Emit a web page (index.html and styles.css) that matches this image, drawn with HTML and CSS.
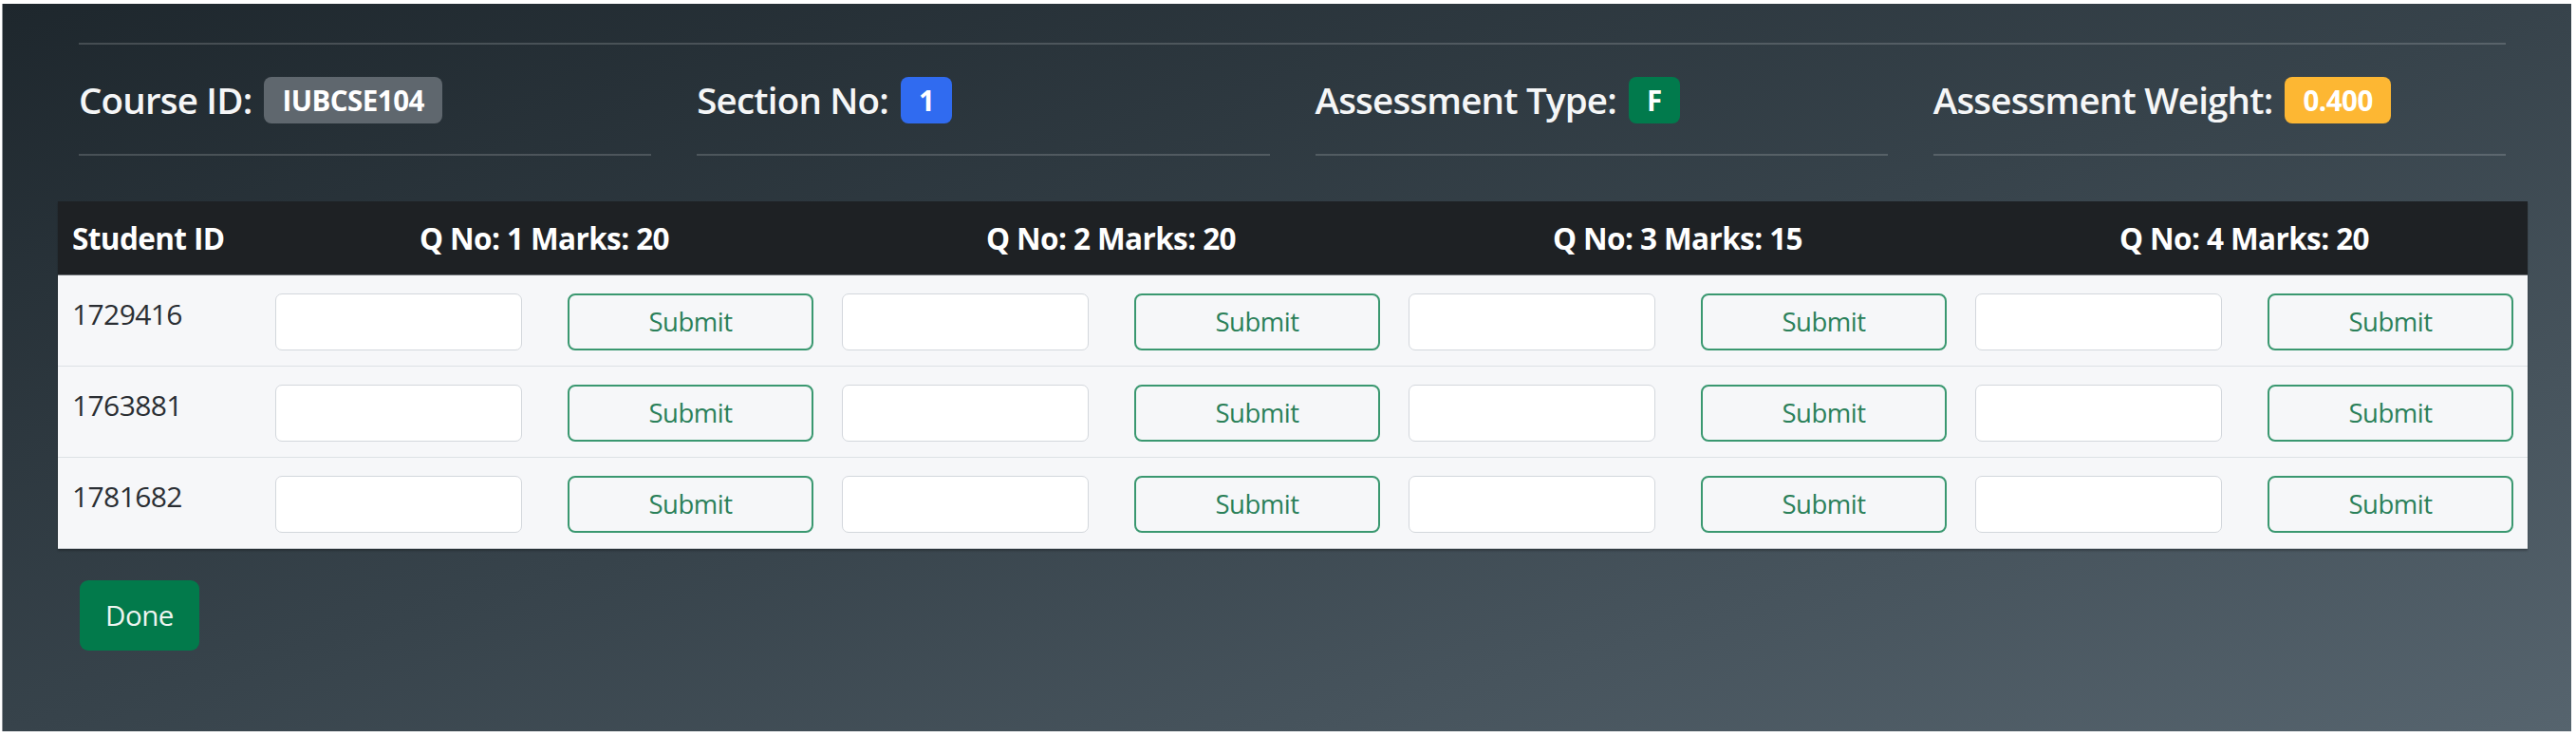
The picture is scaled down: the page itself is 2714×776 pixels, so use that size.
FILE: index.html
```html
<!DOCTYPE html>
<html lang="en">
<head>
<meta charset="utf-8">
<title>Marks Entry</title>
<link rel="stylesheet" href="styles.css">
</head>
<body>
<div class="page">
  <div class="top-rule"></div>
  <div class="info">
    <div class="info-item">
      <div class="info-line"><span class="label">Course ID:</span><span class="badge badge-secondary">IUBCSE104</span></div>
      <div class="rule"></div>
    </div>
    <div class="info-item">
      <div class="info-line"><span class="label">Section No:</span><span class="badge badge-primary">1</span></div>
      <div class="rule"></div>
    </div>
    <div class="info-item">
      <div class="info-line"><span class="label">Assessment Type:</span><span class="badge badge-success">F</span></div>
      <div class="rule"></div>
    </div>
    <div class="info-item">
      <div class="info-line"><span class="label">Assessment Weight:</span><span class="badge badge-warning">0.400</span></div>
      <div class="rule"></div>
    </div>
  </div>

  <table class="marks">
    <colgroup>
      <col class="c-id">
      <col class="c-in"><col class="c-btn">
      <col class="c-in"><col class="c-btn">
      <col class="c-in"><col class="c-btn">
      <col class="c-in"><col class="c-btn">
    </colgroup>
    <thead>
      <tr>
        <th class="th-id">Student ID</th>
        <th colspan="2">Q No: 1 Marks: 20</th>
        <th colspan="2">Q No: 2 Marks: 20</th>
        <th colspan="2">Q No: 3 Marks: 15</th>
        <th colspan="2">Q No: 4 Marks: 20</th>
      </tr>
    </thead>
    <tbody>
      <tr>
        <td class="sid">1729416</td>
        <td><input class="field" type="text"></td><td><button class="submit" type="button">Submit</button></td>
        <td><input class="field" type="text"></td><td><button class="submit" type="button">Submit</button></td>
        <td><input class="field" type="text"></td><td><button class="submit" type="button">Submit</button></td>
        <td><input class="field" type="text"></td><td><button class="submit" type="button">Submit</button></td>
      </tr>
      <tr>
        <td class="sid">1763881</td>
        <td><input class="field" type="text"></td><td><button class="submit" type="button">Submit</button></td>
        <td><input class="field" type="text"></td><td><button class="submit" type="button">Submit</button></td>
        <td><input class="field" type="text"></td><td><button class="submit" type="button">Submit</button></td>
        <td><input class="field" type="text"></td><td><button class="submit" type="button">Submit</button></td>
      </tr>
      <tr>
        <td class="sid">1781682</td>
        <td><input class="field" type="text"></td><td><button class="submit" type="button">Submit</button></td>
        <td><input class="field" type="text"></td><td><button class="submit" type="button">Submit</button></td>
        <td><input class="field" type="text"></td><td><button class="submit" type="button">Submit</button></td>
        <td><input class="field" type="text"></td><td><button class="submit" type="button">Submit</button></td>
      </tr>
    </tbody>
  </table>

  <button class="done" type="button">Done</button>
</div>
</body>
</html>
```

FILE: styles.css
```css
* { box-sizing: border-box; }

html, body {
  margin: 0;
  padding: 0;
  background: #ffffff;
}

body {
  font-family: "Open Sans", "Noto Sans", "Liberation Sans", sans-serif;
  color: #212529;
}

.page {
  margin: 4px 5px 0 2px;
  height: 766px;
  border-left: 1px solid #8d9296;
  background: linear-gradient(to bottom right, #1e272d 0%, #37434b 50%, #56646e 100%);
  padding: 41px 47px 0 58px;
}

.top-rule {
  margin: 0 22px;
  height: 2px;
  background: rgba(255, 255, 255, 0.17);
}

.info {
  margin: 0 22px;
  display: grid;
  grid-template-columns: repeat(4, 1fr);
  column-gap: 48px;
}

.info-item {
  display: flex;
  flex-direction: column;
}

.info-line {
  margin-top: 34px;
  height: 49px;
  display: flex;
  align-items: center;
  gap: 13px;
}

.label {
  color: #f5f6f7;
  font-size: 38.5px;
  font-weight: 600;
  line-height: 1;
  letter-spacing: -0.8px;
}

.badge {
  height: 49px;
  padding: 0 19px;
  border-radius: 8px;
  color: #ffffff;
  font-size: 29.5px;
  font-weight: 700;
  line-height: 49px;
  letter-spacing: -0.5px;
}

.badge-secondary { background: #5f676e; }
.badge-primary { background: #306bf0; }
.badge-success { background: #017a4c; }
.badge-warning { background: #fdb733; }

.rule {
  margin-top: 32px;
  height: 2px;
  background: rgba(255, 255, 255, 0.17);
}

.marks {
  margin-top: 48px;
  width: 2602px;
  table-layout: fixed;
  border-collapse: collapse;
  background: #f6f7f9;
  box-shadow: 0 2px 2px rgba(0, 0, 0, 0.25);
}

.c-id { width: 214px; }
.c-in { width: 308px; }
.c-btn { width: 289px; }

.marks th {
  height: 77px;
  background: #1e2124;
  color: #ffffff;
  font-size: 31.5px;
  font-weight: 700;
  text-align: center;
  padding: 0 15px;
  border-bottom: 1px solid #6e7377;
  letter-spacing: -0.6px;
}

.marks th.th-id {
  text-align: left;
}

.marks td {
  height: 95px;
  padding: 19px 15px 16px;
  vertical-align: top;
  border-bottom: 1px solid #dde1e5;
}

.marks tbody tr:last-child td {
  border-bottom: 1px solid #c8ccd0;
}

.marks td.sid {
  font-size: 30px;
  color: #2a2e33;
  line-height: 1.4;
  padding-top: 20px;
  letter-spacing: -0.6px;
}

.field {
  display: block;
  width: 260px;
  height: 60px;
  margin: 0;
  background: #ffffff;
  border: 1px solid #d3d7dc;
  border-radius: 7px;
}

.submit {
  display: block;
  width: 100%;
  height: 60px;
  margin: 0;
  padding: 0;
  background: transparent;
  border: 2px solid #3a9870;
  border-radius: 8px;
  color: #2a8059;
  font-family: inherit;
  font-size: 27.5px;
  letter-spacing: -0.5px;
}

.done {
  display: block;
  margin: 33px 0 0 23px;
  width: 126px;
  height: 74px;
  padding: 0;
  background: #027a4b;
  border: none;
  border-radius: 9px;
  color: #eef5f1;
  font-family: inherit;
  font-size: 29.5px;
  letter-spacing: -0.5px;
}
```
